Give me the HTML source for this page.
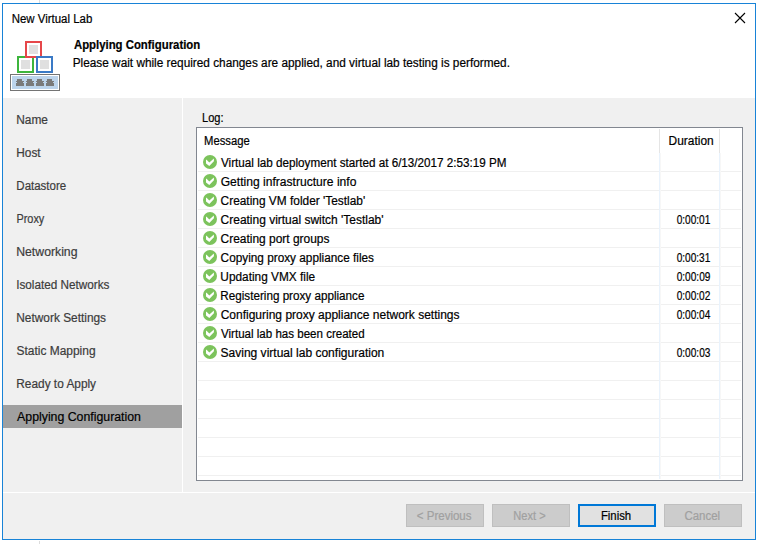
<!DOCTYPE html>
<html><head><meta charset="utf-8">
<style>
*{margin:0;padding:0;box-sizing:border-box}
html,body{width:760px;height:544px;background:#fff;overflow:hidden;position:relative;font-family:"Liberation Sans",sans-serif;font-size:12px;color:#000}
.a{position:absolute}
.t{position:absolute;white-space:nowrap;line-height:16px;transform-origin:0 0;-webkit-text-stroke:0.2px currentColor}
</style></head><body>
<div class="a" style="left:2px;top:3px;width:754px;height:537px;border:1px solid #1883d7;background:#fff"></div>
<div class="a" style="left:39px;top:0;width:1px;height:3px;background:#dcdcdc"></div>
<div class="a" style="left:39px;top:541px;width:1px;height:3px;background:#dcdcdc"></div>
<div class="a" style="left:3px;top:98px;width:179px;height:394px;background:#f0f0f0"></div>
<div class="a" style="left:183px;top:98px;width:572px;height:394px;background:#f0f0f0"></div>
<div class="a" style="left:3px;top:493px;width:752px;height:46px;background:#f0f0f0"></div>
<div class="a" style="left:3px;top:405px;width:179px;height:23px;background:#a0a0a0"></div>
<svg class="a" style="left:730px;top:8px" width="20" height="20" viewBox="0 0 20 20"><path d="M5 5 L15 15 M15 5 L5 15" stroke="#000" stroke-width="1.1" fill="none"/></svg>
<svg class="a" style="left:8px;top:38px" width="56" height="56" viewBox="0 0 56 56" shape-rendering="crispEdges">
<rect x="10" y="19" width="15" height="15" fill="#fff" stroke="#3db53d" stroke-width="2"/>
<rect x="13" y="22" width="9" height="9" fill="#e0e0e0"/>
<rect x="18" y="4" width="15" height="15" fill="#fff" stroke="#e6474a" stroke-width="2"/>
<rect x="21" y="7" width="9" height="9" fill="#e0e0e0"/>
<rect x="29" y="19" width="15" height="15" fill="#fff" stroke="#3a7ac6" stroke-width="2"/>
<rect x="32" y="22" width="9" height="9" fill="#e0e0e0"/>
<rect x="2.5" y="36.5" width="49" height="16" fill="#fff" stroke="#747474" stroke-width="1"/>
<rect x="4" y="38" width="46" height="13" fill="#bcd4ec"/>
<g fill="#7a7a7a">
<path d="M8 43h1v-2h5v2h2v1h-1v1h1v3h-8v-3h1v-1h-1z"/>
<path d="M18 43h1v-2h5v2h2v1h-1v1h1v3h-8v-3h1v-1h-1z"/>
<path d="M28 43h1v-2h5v2h2v1h-1v1h1v3h-8v-3h1v-1h-1z"/>
<path d="M38 43h1v-2h5v2h2v1h-1v1h1v3h-8v-3h1v-1h-1z"/>
</g></svg>
<div class="a" style="left:196px;top:127px;width:547px;height:354px;border:1px solid #828790;background:#fff"></div>
<div class="a" style="left:659px;top:129px;width:1px;height:24px;background:#e5e5e5"></div>
<div class="a" style="left:719px;top:129px;width:1px;height:24px;background:#e5e5e5"></div>
<div class="a" style="left:198px;top:171px;width:543px;height:1px;background:#f0f0f0"></div>
<div class="a" style="left:198px;top:190px;width:543px;height:1px;background:#f0f0f0"></div>
<div class="a" style="left:198px;top:209px;width:543px;height:1px;background:#f0f0f0"></div>
<div class="a" style="left:198px;top:228px;width:543px;height:1px;background:#f0f0f0"></div>
<div class="a" style="left:198px;top:247px;width:543px;height:1px;background:#f0f0f0"></div>
<div class="a" style="left:198px;top:266px;width:543px;height:1px;background:#f0f0f0"></div>
<div class="a" style="left:198px;top:285px;width:543px;height:1px;background:#f0f0f0"></div>
<div class="a" style="left:198px;top:304px;width:543px;height:1px;background:#f0f0f0"></div>
<div class="a" style="left:198px;top:323px;width:543px;height:1px;background:#f0f0f0"></div>
<div class="a" style="left:198px;top:342px;width:543px;height:1px;background:#f0f0f0"></div>
<div class="a" style="left:198px;top:361px;width:543px;height:1px;background:#f0f0f0"></div>
<div class="a" style="left:198px;top:380px;width:543px;height:1px;background:#f0f0f0"></div>
<div class="a" style="left:198px;top:399px;width:543px;height:1px;background:#f0f0f0"></div>
<div class="a" style="left:198px;top:418px;width:543px;height:1px;background:#f0f0f0"></div>
<div class="a" style="left:198px;top:437px;width:543px;height:1px;background:#f0f0f0"></div>
<div class="a" style="left:198px;top:456px;width:543px;height:1px;background:#f0f0f0"></div>
<div class="a" style="left:198px;top:475px;width:543px;height:1px;background:#f0f0f0"></div>
<div class="a" style="left:659px;top:153px;width:1px;height:326px;background:#e9f3fd"></div><div class="a" style="left:660px;top:153px;width:1px;height:326px;background:#f7f7f7"></div>
<div class="a" style="left:719px;top:153px;width:1px;height:326px;background:#e9f3fd"></div><div class="a" style="left:720px;top:153px;width:1px;height:326px;background:#f7f7f7"></div>
<svg class="a" style="left:203px;top:155px" width="14" height="14" viewBox="0 0 14 14"><circle cx="7" cy="7" r="7" fill="#7cc35c"/><path d="M3 4.8 L3 8.4 L6.3 10.9 L10.9 6.2 L10.9 3.6 L6.3 7.4 L3.6 4.8 Z" fill="#fff"/></svg>
<svg class="a" style="left:203px;top:174px" width="14" height="14" viewBox="0 0 14 14"><circle cx="7" cy="7" r="7" fill="#7cc35c"/><path d="M3 4.8 L3 8.4 L6.3 10.9 L10.9 6.2 L10.9 3.6 L6.3 7.4 L3.6 4.8 Z" fill="#fff"/></svg>
<svg class="a" style="left:203px;top:193px" width="14" height="14" viewBox="0 0 14 14"><circle cx="7" cy="7" r="7" fill="#7cc35c"/><path d="M3 4.8 L3 8.4 L6.3 10.9 L10.9 6.2 L10.9 3.6 L6.3 7.4 L3.6 4.8 Z" fill="#fff"/></svg>
<svg class="a" style="left:203px;top:212px" width="14" height="14" viewBox="0 0 14 14"><circle cx="7" cy="7" r="7" fill="#7cc35c"/><path d="M3 4.8 L3 8.4 L6.3 10.9 L10.9 6.2 L10.9 3.6 L6.3 7.4 L3.6 4.8 Z" fill="#fff"/></svg>
<svg class="a" style="left:203px;top:231px" width="14" height="14" viewBox="0 0 14 14"><circle cx="7" cy="7" r="7" fill="#7cc35c"/><path d="M3 4.8 L3 8.4 L6.3 10.9 L10.9 6.2 L10.9 3.6 L6.3 7.4 L3.6 4.8 Z" fill="#fff"/></svg>
<svg class="a" style="left:203px;top:250px" width="14" height="14" viewBox="0 0 14 14"><circle cx="7" cy="7" r="7" fill="#7cc35c"/><path d="M3 4.8 L3 8.4 L6.3 10.9 L10.9 6.2 L10.9 3.6 L6.3 7.4 L3.6 4.8 Z" fill="#fff"/></svg>
<svg class="a" style="left:203px;top:269px" width="14" height="14" viewBox="0 0 14 14"><circle cx="7" cy="7" r="7" fill="#7cc35c"/><path d="M3 4.8 L3 8.4 L6.3 10.9 L10.9 6.2 L10.9 3.6 L6.3 7.4 L3.6 4.8 Z" fill="#fff"/></svg>
<svg class="a" style="left:203px;top:288px" width="14" height="14" viewBox="0 0 14 14"><circle cx="7" cy="7" r="7" fill="#7cc35c"/><path d="M3 4.8 L3 8.4 L6.3 10.9 L10.9 6.2 L10.9 3.6 L6.3 7.4 L3.6 4.8 Z" fill="#fff"/></svg>
<svg class="a" style="left:203px;top:307px" width="14" height="14" viewBox="0 0 14 14"><circle cx="7" cy="7" r="7" fill="#7cc35c"/><path d="M3 4.8 L3 8.4 L6.3 10.9 L10.9 6.2 L10.9 3.6 L6.3 7.4 L3.6 4.8 Z" fill="#fff"/></svg>
<svg class="a" style="left:203px;top:326px" width="14" height="14" viewBox="0 0 14 14"><circle cx="7" cy="7" r="7" fill="#7cc35c"/><path d="M3 4.8 L3 8.4 L6.3 10.9 L10.9 6.2 L10.9 3.6 L6.3 7.4 L3.6 4.8 Z" fill="#fff"/></svg>
<svg class="a" style="left:203px;top:345px" width="14" height="14" viewBox="0 0 14 14"><circle cx="7" cy="7" r="7" fill="#7cc35c"/><path d="M3 4.8 L3 8.4 L6.3 10.9 L10.9 6.2 L10.9 3.6 L6.3 7.4 L3.6 4.8 Z" fill="#fff"/></svg>
<div class="a" style="left:406px;top:504px;width:78px;height:23px;border:1px solid #bfbfbf;background:#cccccc"></div>
<div class="a" style="left:492px;top:504px;width:78px;height:23px;border:1px solid #bfbfbf;background:#cccccc"></div>
<div class="a" style="left:664px;top:504px;width:78px;height:23px;border:1px solid #bfbfbf;background:#cccccc"></div>
<div class="a" style="left:578px;top:504px;width:78px;height:23px;border:2px solid #0078d7;background:#e1e1e1"></div>
<div class="t" style="left:0;top:11.24px;font-size:12.3px;font-weight:400;color:#000;transform:translateX(11.67px) scaleX(0.9309)">New Virtual Lab</div>
<div class="t" style="left:0;top:37.04px;font-size:12.0px;font-weight:700;color:#000;transform:translateX(73.93px) scaleX(0.9473)">Applying Configuration</div>
<div class="t" style="left:0;top:55.44px;font-size:12.3px;font-weight:400;color:#000;transform:translateX(72.71px) scaleX(0.9604)">Please wait while required changes are applied, and virtual lab testing is performed.</div>
<div class="t" style="left:0;top:111.94px;font-size:12.3px;font-weight:400;color:#3c3c3c;transform:translateX(16.26px) scaleX(0.9672)">Name</div>
<div class="t" style="left:0;top:144.94px;font-size:12.3px;font-weight:400;color:#3c3c3c;transform:translateX(16.26px) scaleX(0.9616)">Host</div>
<div class="t" style="left:0;top:177.94px;font-size:12.3px;font-weight:400;color:#3c3c3c;transform:translateX(16.33px) scaleX(0.9346)">Datastore</div>
<div class="t" style="left:0;top:210.94px;font-size:12.3px;font-weight:400;color:#3c3c3c;transform:translateX(16.43px) scaleX(0.8867)">Proxy</div>
<div class="t" style="left:0;top:243.94px;font-size:12.3px;font-weight:400;color:#3c3c3c;transform:translateX(16.21px) scaleX(0.9965)">Networking</div>
<div class="t" style="left:0;top:276.94px;font-size:12.3px;font-weight:400;color:#3c3c3c;transform:translateX(16.15px) scaleX(0.9549)">Isolated Networks</div>
<div class="t" style="left:0;top:309.94px;font-size:12.3px;font-weight:400;color:#3c3c3c;transform:translateX(16.28px) scaleX(0.9657)">Network Settings</div>
<div class="t" style="left:0;top:342.94px;font-size:12.3px;font-weight:400;color:#3c3c3c;transform:translateX(16.51px) scaleX(0.9716)">Static Mapping</div>
<div class="t" style="left:0;top:375.94px;font-size:12.3px;font-weight:400;color:#3c3c3c;transform:translateX(16.29px) scaleX(0.9642)">Ready to Apply</div>
<div class="t" style="left:0;top:408.94px;font-size:12.3px;font-weight:400;color:#000;transform:translateX(17.08px) scaleX(1.0013)">Applying Configuration</div>
<div class="t" style="left:0;top:109.54px;font-size:12.3px;font-weight:400;color:#000;transform:translateX(202.06px) scaleX(0.8997)">Log:</div>
<div class="t" style="left:0;top:132.54px;font-size:12.3px;font-weight:400;color:#000;transform:translateX(204.03px) scaleX(0.9164)">Message</div>
<div class="t" style="left:0;top:132.74px;font-size:12.3px;font-weight:400;color:#000;transform:translateX(668.60px) scaleX(0.9700)">Duration</div>
<div class="t" style="left:0;top:154.54px;font-size:12.3px;font-weight:400;color:#000;transform:translateX(221.04px) scaleX(0.9501)">Virtual lab deployment started at 6/13/2017 2:53:19 PM</div>
<div class="t" style="left:0;top:173.54px;font-size:12.3px;font-weight:400;color:#000;transform:translateX(220.67px) scaleX(0.9829)">Getting infrastructure info</div>
<div class="t" style="left:0;top:192.54px;font-size:12.3px;font-weight:400;color:#000;transform:translateX(220.61px) scaleX(0.9666)">Creating VM folder &#x27;Testlab&#x27;</div>
<div class="t" style="left:0;top:211.54px;font-size:12.3px;font-weight:400;color:#000;transform:translateX(220.59px) scaleX(0.9735)">Creating virtual switch &#x27;Testlab&#x27;</div>
<div class="t" style="left:0;top:211.54px;font-size:12.3px;font-weight:400;color:#000;transform:translateX(676.67px) scaleX(0.8204)">0:00:01</div>
<div class="t" style="left:0;top:230.54px;font-size:12.3px;font-weight:400;color:#000;transform:translateX(220.60px) scaleX(0.9713)">Creating port groups</div>
<div class="t" style="left:0;top:249.54px;font-size:12.3px;font-weight:400;color:#000;transform:translateX(220.62px) scaleX(0.9590)">Copying proxy appliance files</div>
<div class="t" style="left:0;top:249.54px;font-size:12.3px;font-weight:400;color:#000;transform:translateX(676.67px) scaleX(0.8204)">0:00:31</div>
<div class="t" style="left:0;top:268.54px;font-size:12.3px;font-weight:400;color:#000;transform:translateX(220.34px) scaleX(0.9632)">Updating VMX file</div>
<div class="t" style="left:0;top:268.54px;font-size:12.3px;font-weight:400;color:#000;transform:translateX(676.67px) scaleX(0.8222)">0:00:09</div>
<div class="t" style="left:0;top:287.54px;font-size:12.3px;font-weight:400;color:#000;transform:translateX(220.32px) scaleX(0.9496)">Registering proxy appliance</div>
<div class="t" style="left:0;top:287.54px;font-size:12.3px;font-weight:400;color:#000;transform:translateX(676.67px) scaleX(0.8210)">0:00:02</div>
<div class="t" style="left:0;top:306.54px;font-size:12.3px;font-weight:400;color:#000;transform:translateX(220.66px) scaleX(0.9761)">Configuring proxy appliance network settings</div>
<div class="t" style="left:0;top:306.54px;font-size:12.3px;font-weight:400;color:#000;transform:translateX(676.66px) scaleX(0.8196)">0:00:04</div>
<div class="t" style="left:0;top:325.54px;font-size:12.3px;font-weight:400;color:#000;transform:translateX(221.05px) scaleX(0.9393)">Virtual lab has been created</div>
<div class="t" style="left:0;top:344.54px;font-size:12.3px;font-weight:400;color:#000;transform:translateX(220.51px) scaleX(0.9778)">Saving virtual lab configuration</div>
<div class="t" style="left:0;top:344.54px;font-size:12.3px;font-weight:400;color:#000;transform:translateX(676.67px) scaleX(0.8222)">0:00:03</div>
<div class="t" style="left:0;top:507.64px;font-size:12.3px;font-weight:400;color:#a0a0a0;transform:translateX(416.82px) scaleX(0.9356)">&lt; Previous</div>
<div class="t" style="left:0;top:507.64px;font-size:12.3px;font-weight:400;color:#a0a0a0;transform:translateX(513.37px) scaleX(0.8980)">Next &gt;</div>
<div class="t" style="left:0;top:507.64px;font-size:12.3px;font-weight:400;color:#000;transform:translateX(600.90px) scaleX(0.9216)">Finish</div>
<div class="t" style="left:0;top:507.64px;font-size:12.3px;font-weight:400;color:#a0a0a0;transform:translateX(684.45px) scaleX(0.9312)">Cancel</div>
</body></html>
